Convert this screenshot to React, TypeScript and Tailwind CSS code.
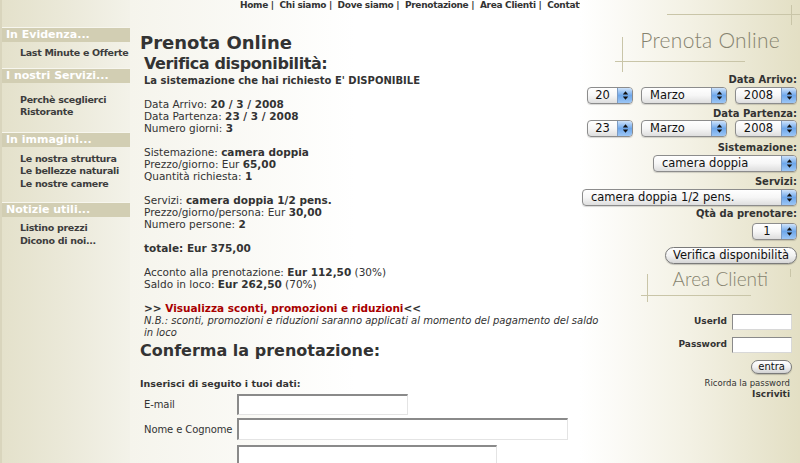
import React from "react";

function Arrows() {
  return (
    <svg width="7" height="11" viewBox="0 0 7 11">
      <path d="M3.5 1.2 L6.2 4.6 H0.8Z" fill="#111" />
      <path d="M3.5 9.8 L6.2 6.4 H0.8Z" fill="#111" />
    </svg>
  );
}

function Sel({ className, text, center }: { className: string; text: string; center?: boolean }) {
  return (
    <div
      className={
        "flex h-[17px] rounded-[4px] border border-[#8c8c8c] bg-gradient-to-b from-white via-[#f6f6f6] to-[#dedede] shadow-[0_1px_1px_rgba(0,0,0,0.15)] overflow-hidden font-normal " +
        className
      }
    >
      <div
        className={
          "flex-1 flex items-center text-[11.5px] leading-[15px] text-[#111] whitespace-nowrap " +
          (center ? "justify-center" : "pl-[8px]")
        }
      >
        {text}
      </div>
      <div className="w-[15px] flex items-center justify-center bg-gradient-to-b from-[#cfe3fa] via-[#6ea7ea] to-[#9cc6f5] border-l border-[#7d9cc4]">
        <Arrows />
      </div>
    </div>
  );
}

function SideHead({ children }: { children: React.ReactNode }) {
  return (
    <div className="border-t border-[#f7f6ee] h-[15px] bg-[#d2ceb3] pl-[4px] text-[11px] leading-[14px] font-bold text-white whitespace-nowrap">
      {children}
    </div>
  );
}

function SideItem({ children }: { children: React.ReactNode }) {
  return (
    <div className="pl-[18px] text-[9.5px] tracking-[-0.3px] leading-[12.5px] font-bold text-[#3d3d3d] whitespace-nowrap">
      {children}
    </div>
  );
}

function Line({ children }: { children?: React.ReactNode }) {
  return <div className="h-[12px] leading-[12px] whitespace-nowrap">{children}</div>;
}

const inputCls =
  "bg-white border border-t-[2px] border-l-[2px] border-t-[#8a8a8a] border-l-[#8a8a8a] border-r-[#e4e4e4] border-b-[#e4e4e4]";

export default function App() {
  return (
    <div className="w-[800px] h-[463px] overflow-hidden flex bg-white font-['DejaVu_Sans',Verdana,sans-serif] text-[#333]">
      {/* Sidebar */}
      <div className="w-[130px] shrink-0 h-full bg-gradient-to-r from-[#e4e1cb] via-[#ebe9d9] to-[#f3f2e9] border-l-[2px] border-[#d9d5bd]">
        <div className="h-[27px]" />
        <SideHead>In Evidenza...</SideHead>
        <div className="pt-[5px] pb-[8px]">
          <SideItem>Last Minute e Offerte</SideItem>
        </div>
        <SideHead>I nostri Servizi...</SideHead>
        <div className="pt-[11px] pb-[13px]">
          <SideItem>Perchè sceglierci</SideItem>
          <SideItem>Ristorante</SideItem>
        </div>
        <SideHead>In immagini...</SideHead>
        <div className="pt-[6px] pb-[12px]">
          <SideItem>Le nostra struttura</SideItem>
          <SideItem>Le bellezze naturali</SideItem>
          <SideItem>Le nostre camere</SideItem>
        </div>
        <SideHead>Notizie utili...</SideHead>
        <div className="pt-[5px]">
          <SideItem>Listino prezzi</SideItem>
          <SideItem>Dicono di noi...</SideItem>
        </div>
      </div>

      {/* Main */}
      <div className="relative z-10 w-[450px] shrink-0 h-full bg-gradient-to-r from-[#f5f4ec] via-white to-white">
        <div className="pl-[110px] h-[11px] overflow-hidden whitespace-nowrap text-[9px] tracking-[-0.3px] leading-[11px] font-bold text-[#333]">
          Home |&nbsp; Chi siamo |&nbsp; Dove siamo |&nbsp; Prenotazione |&nbsp; Area Clienti |&nbsp; Contatti
        </div>
        <div className="pl-[10px] mt-[21px] text-[18px] leading-[22px] font-bold text-[#333]">Prenota Online</div>
        <div className="pl-[14px]">
          <div className="text-[16px] tracking-[-0.4px] leading-[20px] font-bold text-[#333]">Verifica disponibilità:</div>
          <div className="text-[10.5px] text-[#333]">
            <Line>
              <b className="text-[10px]">La sistemazione che hai richiesto E' DISPONIBILE</b>
            </Line>
            <Line />
            <Line>
              Data Arrivo: <b>20 / 3 / 2008</b>
            </Line>
            <Line>
              Data Partenza: <b>23 / 3 / 2008</b>
            </Line>
            <Line>
              Numero giorni: <b>3</b>
            </Line>
            <Line />
            <Line>
              Sistemazione: <b>camera doppia</b>
            </Line>
            <Line>
              Prezzo/giorno: Eur <b>65,00</b>
            </Line>
            <Line>
              Quantità richiesta: <b>1</b>
            </Line>
            <Line />
            <Line>
              Servizi: <b>camera doppia 1/2 pens.</b>
            </Line>
            <Line>
              Prezzo/giorno/persona: Eur <b>30,00</b>
            </Line>
            <Line>
              Numero persone: <b>2</b>
            </Line>
            <Line />
            <Line>
              <b>totale: Eur 375,00</b>
            </Line>
            <Line />
            <Line>
              Acconto alla prenotazione: <b>Eur 112,50</b> (30%)
            </Line>
            <Line>
              Saldo in loco: <b>Eur 262,50</b> (70%)
            </Line>
            <Line />
            <Line>
              <b>
                &gt;&gt; <span className="text-[#a80000]">Visualizza sconti, promozioni e riduzioni</span>&lt;&lt;
              </b>
            </Line>
            <Line>
              <i className="text-[10px]">N.B.: sconti, promozioni e riduzioni saranno applicati al momento del pagamento del saldo</i>
            </Line>
            <Line>
              <i className="text-[10px]">in loco</i>
            </Line>
          </div>
        </div>
        <div className="pl-[10px] mt-[3px] text-[16px] leading-[20px] font-bold text-[#333]">Conferma la prenotazione:</div>
        <div className="pl-[10px] mt-[17px] text-[9.5px] leading-[12px] font-bold text-[#333] whitespace-nowrap">
          Inserisci di seguito i tuoi dati:
        </div>
        <div className="pl-[14px] mt-[4px] flex flex-col gap-[3px] text-[10px] tracking-[-0.1px] text-[#333]">
          <div className="flex items-center">
            <div className="w-[93px] whitespace-nowrap">E-mail</div>
            <div className={"w-[171px] h-[21px] " + inputCls} />
          </div>
          <div className="flex items-center">
            <div className="w-[93px] whitespace-nowrap">Nome e Cognome</div>
            <div className={"w-[331px] h-[22px] " + inputCls} />
          </div>
          <div className="flex items-center mt-[2px]">
            <div className="w-[93px]" />
            <div className={"w-[260px] h-[22px] " + inputCls} />
          </div>
        </div>
      </div>

      {/* Right */}
      <div className="w-[220px] shrink-0 h-full bg-gradient-to-r from-white via-[#f3f1e4] to-[#e3dfc4]">
        <div className="relative h-[73px]">
          <div className="absolute left-[87px] top-[14px] w-[133px] h-px bg-[#c9c5a8]" />
          <div className="absolute left-[211px] top-[5px] w-px h-[20px] bg-[#c9c5a8]" />
          <div className="absolute left-[42px] top-[37px] w-px h-[35px] bg-[#c9c5a8]" />
          <div className="absolute left-[35px] top-[61px] w-[130px] h-px bg-[#c9c5a8]" />
          <div className="pt-[28px] pr-[20px] text-right text-[21px] leading-[24px] font-light font-['Lato',sans-serif] text-[#86836f] tracking-[0.3px]">
            Prenota Online
          </div>
        </div>
        <div className="flex flex-col items-end pr-[3px] text-[10px] font-bold text-[#333]">
          <div className="leading-[13px]">Data Arrivo:</div>
          <div className="mt-[1px] flex">
            <Sel className="w-[46px]" text="20" center />
            <Sel className="w-[86px] ml-[8px]" text="Marzo" />
            <Sel className="w-[62px] ml-[8px]" text="2008" center />
          </div>
          <div className="mt-[3px] leading-[13px]">Data Partenza:</div>
          <div className="mt-[0px] flex">
            <Sel className="w-[46px]" text="23" center />
            <Sel className="w-[86px] ml-[8px]" text="Marzo" />
            <Sel className="w-[62px] ml-[8px]" text="2008" center />
          </div>
          <div className="mt-[4px] leading-[13px]">Sistemazione:</div>
          <Sel className="w-[144px] mt-[1px]" text="camera doppia" />
          <div className="mt-[3px] leading-[13px]">Servizi:</div>
          <Sel className="w-[215px] mt-[1px]" text="camera doppia 1/2 pens." />
          <div className="mt-[1px] leading-[13px]">Qtà da prenotare:</div>
          <Sel className="w-[45px] mt-[3px]" text="1" center />
          <div className="mt-[7px] h-[17px] px-[7px] rounded-full border border-[#7a7a7a] bg-gradient-to-b from-white via-[#f2f2f2] to-[#d6d6d6] text-[11.5px] leading-[15px] font-normal text-[#111] shadow-[0_1px_1px_rgba(0,0,0,0.2)] whitespace-nowrap">
            Verifica disponibilità
          </div>
        </div>

        <div className="relative h-[50px] mt-[2px]">
          <div className="absolute left-[67px] top-[8px] w-px h-[28px] bg-[#c9c5a8]" />
          <div className="absolute left-[61px] top-[29px] w-[110px] h-px bg-[#c9c5a8]" />
          <div className="absolute left-[210px] top-[3px] w-px h-[8px] bg-[#c9c5a8]" />
          <div className="pt-[2px] pr-[32px] text-right text-[19px] leading-[22px] font-light font-['Lato',sans-serif] text-[#86836f]">
            Area Clienti
          </div>
        </div>
        <div className="flex flex-col items-end pr-[8px] mt-[-2px] text-[9px] text-[#333]">
          <div className="flex items-center">
            <div className="font-bold mr-[5px]">UserId</div>
            <div className="w-[60px] h-[16px] bg-white border border-t-[#8a8a8a] border-l-[#8a8a8a] border-r-[#d8d8d8] border-b-[#d8d8d8]" />
          </div>
          <div className="flex items-center mt-[7px]">
            <div className="font-bold mr-[5px]">Password</div>
            <div className="w-[60px] h-[16px] bg-white border border-t-[#8a8a8a] border-l-[#8a8a8a] border-r-[#d8d8d8] border-b-[#d8d8d8]" />
          </div>
          <div className="mt-[7px] h-[14px] px-[6px] rounded-full border border-[#7a7a7a] bg-gradient-to-b from-white via-[#f2f2f2] to-[#d2d2d2] text-[10px] leading-[12px] text-[#111] shadow-[0_1px_1px_rgba(0,0,0,0.2)]">
            entra
          </div>
          <div className="mt-[4px] pr-[2px] leading-[11px] text-[8.5px] whitespace-nowrap">Ricorda la password</div>
          <div className="pr-[2px] leading-[11px] font-bold">Iscriviti</div>
        </div>
      </div>
    </div>
  );
}
